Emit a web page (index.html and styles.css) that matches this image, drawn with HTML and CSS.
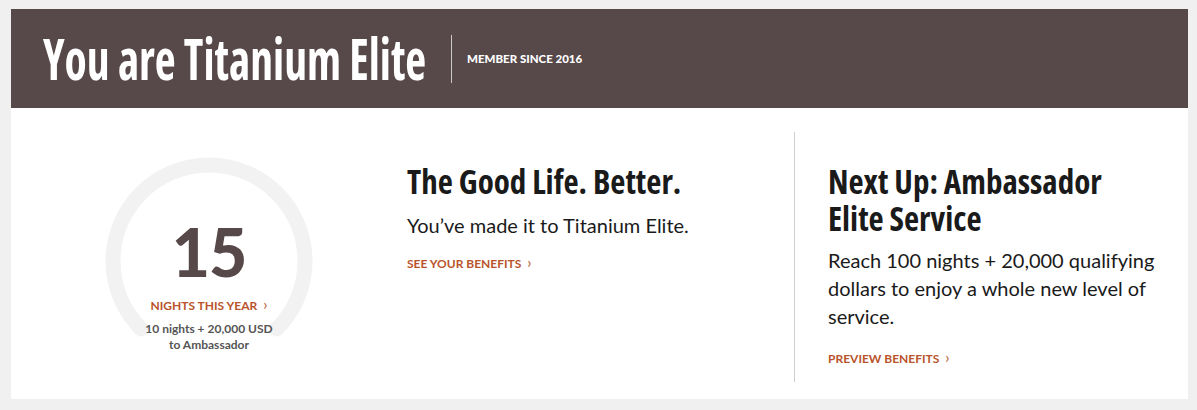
FILE: index.html
```html
<!DOCTYPE html>
<html>
<head>
<meta charset="utf-8">
<link rel="stylesheet" href="styles.css">
</head>
<body>
<div class="card">
  <header class="banner">
    <h1 class="banner-title">You are Titanium Elite</h1>
    <span class="banner-sep"></span>
    <span class="banner-since">MEMBER SINCE 2016</span>
  </header>
  <section class="status">
    <div class="col-gauge">
      <div class="gauge">
        <svg class="gauge-ring" width="212" height="212" viewBox="0 0 212 212">
          <path d="M 38.12 173.88 A 96 96 0 1 1 173.88 173.88" fill="none" stroke="#f2f2f2" stroke-width="15" stroke-linecap="round"/>
        </svg>
        <div class="gauge-num">15</div>
        <a class="link gauge-link">NIGHTS THIS YEAR <span class="chev">›</span></a>
        <div class="gauge-note">10 nights + 20,000 USD<br>to Ambassador</div>
      </div>
    </div>
    <div class="col-mid">
      <h2 class="heading">The Good Life. Better.</h2>
      <p class="copy">You’ve made it to Titanium Elite.</p>
      <a class="link">SEE YOUR BENEFITS <span class="chev">›</span></a>
    </div>
    <div class="col-next">
      <h2 class="heading"><span class="heading-line">Next Up: Ambassador</span><span class="heading-line">Elite Service</span></h2>
      <p class="copy copy-long">Reach 100 nights + 20,000 qualifying dollars to enjoy a whole new level of service.</p>
      <a class="link">PREVIEW BENEFITS <span class="chev">›</span></a>
    </div>
  </section>
</div>
</body>
</html>
```
FILE: styles.css
```css
html, body {
  margin: 0;
  padding: 0;
}
body {
  background: #f0f0f0;
  padding: 9px 9px 11px 11px;
  font-family: "Lato", "Liberation Sans", sans-serif;
}
.card {
  width: 1177px;
  background: #fff;
}
.banner {
  background: #574849;
  height: 99px;
  display: flex;
  align-items: center;
  padding-left: 32px;
  box-sizing: border-box;
}
.banner-title {
  display: inline-block;
  margin: 0 -95px 0 0;
  color: #fff;
  font-family: "Open Sans", sans-serif;
  font-stretch: 75%;
  font-weight: 700;
  font-size: 57px;
  line-height: 1;
  transform: scaleX(0.8);
  transform-origin: left center;
  white-space: nowrap;
}
.banner-sep {
  width: 1px;
  height: 48px;
  background: #cfc8c8;
  margin-left: 24px;
  margin-right: 15px;
}
.banner-since {
  color: #fff;
  font-weight: 900;
  font-size: 11.5px;
}
.status {
  display: flex;
  height: 291px;
  box-sizing: border-box;
  padding: 24px 0 17px;
}
.col-gauge {
  width: 397px;
  display: flex;
  justify-content: center;
  padding-top: 23px;
  box-sizing: border-box;
}
.gauge {
  position: relative;
  width: 212px;
  height: 212px;
  display: flex;
  flex-direction: column;
  align-items: center;
  padding-top: 64px;
  box-sizing: border-box;
}
.gauge-ring {
  position: absolute;
  left: 0;
  top: 0;
}
.gauge-num {
  position: relative;
  font-size: 66px;
  font-weight: 900;
  color: #574849;
  line-height: 1;
  letter-spacing: -1px;
}
.gauge-link {
  position: relative;
  margin-top: 10px;
}
.gauge-note {
  position: relative;
  margin-top: 8px;
  font-size: 12px;
  font-weight: 700;
  color: #555;
  text-align: center;
  line-height: 16px;
}
.link {
  display: inline-block;
  color: #b9532b;
  font-size: 12px;
  font-weight: 700;
  text-decoration: none;
}
.chev {
  font-size: 15px;
  margin-left: 3px;
  font-weight: 400;
}
.col-mid {
  width: 388px;
  padding-top: 31px;
  box-sizing: border-box;
}
.col-next {
  border-left: 1px solid #cfcfcf;
  padding: 31px 20px 0 33px;
  flex: 1;
}
.heading {
  margin: 0;
  font-family: "Open Sans", sans-serif;
  font-stretch: 75%;
  font-weight: 700;
  font-size: 33px;
  line-height: 37px;
  color: #1a1a1a;
}
.heading-line {
  display: block;
  height: 37px;
}
.copy {
  margin: 11px 0 14px;
  font-size: 20px;
  line-height: 28px;
  color: #1a1a1a;
}
.col-mid .link,
.col-next .link {
  display: block;
}
.copy-long {
  width: 340px;
  margin-top: 9px;
  margin-bottom: 18px;
}
```
